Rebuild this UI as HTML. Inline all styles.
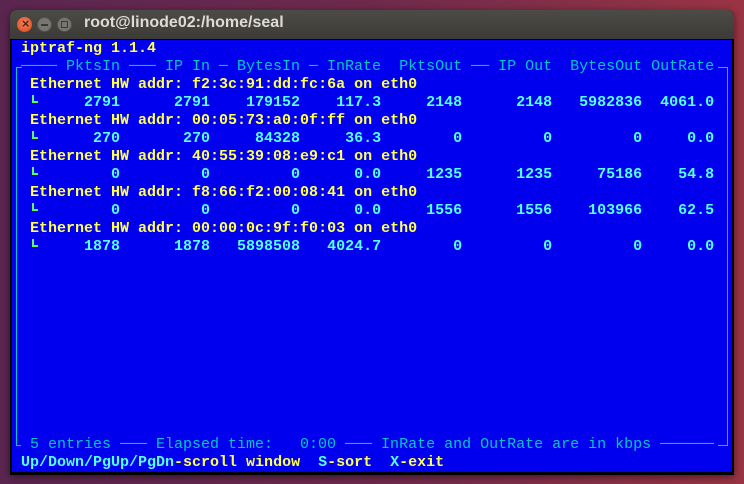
<!DOCTYPE html>
<html><head><meta charset="utf-8"><style>
*{margin:0;padding:0;box-sizing:border-box}
body{width:744px;height:484px;overflow:hidden;position:relative;background:linear-gradient(90deg,#5a2650 0%,#6e2a4c 50%,#9a3444 100%);font-family:"Liberation Mono",monospace}
#win{position:absolute;left:10px;top:10px;width:724px;height:465px;border-radius:7px 7px 0 0;background:#000;overflow:hidden;box-shadow:0 2px 8px rgba(0,0,0,.5)}
#tb{position:absolute;left:0;top:0;width:724px;height:29px;background:linear-gradient(#4c4b46,#3c3b37)}
.btn{position:absolute;top:7px;width:15px;height:15px;border-radius:50%}
#title{position:absolute;left:74px;top:4px;color:#dfdbd2;font:bold 16px "Liberation Sans",sans-serif}
#term{position:absolute;left:2px;top:30px;width:720px;height:432px;background:#0000ee}
pre{position:absolute;left:0;top:0;font:15px/18px "Liberation Mono",monospace;color:#00c8c8;white-space:pre}
.y{color:#ffff55;font-weight:bold}
.c{color:#55ffff;font-weight:bold}
.g{display:inline-block;width:9px;height:18px;position:relative;vertical-align:top}
.g::before{content:"";position:absolute;left:2px;top:1px;width:2px;height:8px;background:#55ff55}
.g::after{content:"";position:absolute;left:2px;top:7px;width:6px;height:2px;background:#55ff55}
.vl{position:absolute;width:1px;background:#00c8c8}
</style></head><body>
<div id="win">
<div id="tb">
<div class="btn" style="left:7px;background:radial-gradient(circle at 50% 40%,#f4805a,#d94a1f)"><span style="position:absolute;left:4px;top:0;font:bold 11px 'DejaVu Sans';color:#4a1a0a">×</span></div>
<div class="btn" style="left:27px;background:#77766f;border:1px solid #55544f"><span style="position:absolute;left:3px;top:6px;width:7px;height:2px;background:#3a3935"></span></div>
<div class="btn" style="left:47px;background:#77766f;border:1px solid #55544f"><span style="position:absolute;left:3px;top:3px;width:7px;height:7px;border:1px solid #3a3935"></span></div>
<div id="title">root@linode02:/home/seal</div>
</div>
<div id="term">
<div class="vl" style="left:4px;top:27px;height:378px"></div>
<div class="vl" style="left:715px;top:27px;height:378px"></div>
<div style="position:absolute;left:4px;top:27px;width:6px;height:1px;background:#00c8c8"></div>
<div style="position:absolute;left:4px;top:405px;width:5px;height:1px;background:#00c8c8"></div>
<div style="position:absolute;left:706px;top:27px;width:10px;height:1px;background:#00c8c8"></div>
<div style="position:absolute;left:706px;top:405px;width:10px;height:1px;background:#00c8c8"></div>
<pre><span class="y"> iptraf-ng 1.1.4</span>
 ──── PktsIn ─── IP In ─ BytesIn ─ InRate  PktsOut ── IP Out  BytesOut OutRate
  <span class="y">Ethernet HW addr: f2:3c:91:dd:fc:6a on eth0</span>
  <span class="g"></span><span class="c">     2791      2791    179152    117.3     2148      2148   5982836  4061.0</span>
  <span class="y">Ethernet HW addr: 00:05:73:a0:0f:ff on eth0</span>
  <span class="g"></span><span class="c">      270       270     84328     36.3        0         0         0     0.0</span>
  <span class="y">Ethernet HW addr: 40:55:39:08:e9:c1 on eth0</span>
  <span class="g"></span><span class="c">        0         0         0      0.0     1235      1235     75186    54.8</span>
  <span class="y">Ethernet HW addr: f8:66:f2:00:08:41 on eth0</span>
  <span class="g"></span><span class="c">        0         0         0      0.0     1556      1556    103966    62.5</span>
  <span class="y">Ethernet HW addr: 00:00:0c:9f:f0:03 on eth0</span>
  <span class="g"></span><span class="c">     1878      1878   5898508   4024.7        0         0         0     0.0</span>










  5 entries ─── Elapsed time:   0:00 ─── InRate and OutRate are in kbps ──────
 <span class="c">Up/Down/PgUp/PgDn</span><span class="y">-scroll window</span>  <span class="c">S</span><span class="y">-sort</span>  <span class="c">X</span><span class="y">-exit</span></pre>
</div>
</div>
</body></html>
